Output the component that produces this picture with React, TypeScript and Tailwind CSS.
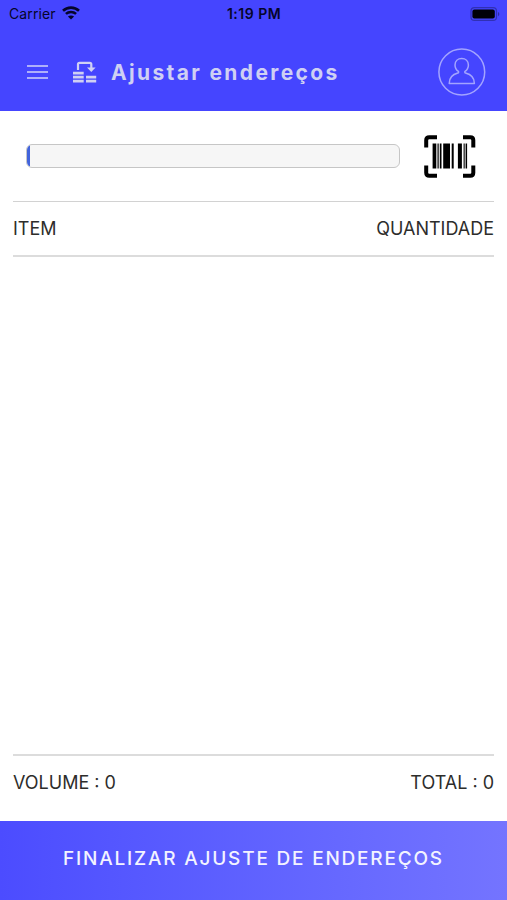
import React from 'react';

const WifiIcon = () => (
  <svg className="ml-[6px] -mt-[2px]" width="18" height="14" viewBox="0 0 18 14" fill="none">
    <path d="M1 4.8C5.4.6 12.6.6 17 4.8" stroke="#05052a" strokeWidth="2.6" />
    <path d="M3.9 7.9C6.8 5.2 11.2 5.2 14.1 7.9" stroke="#05052a" strokeWidth="2.5" />
    <path d="M9 13.6L5.9 10.5C7.6 9 10.4 9 12.1 10.5Z" fill="#05052a" />
  </svg>
);

const BatteryIcon = () => (
  <svg width="32" height="15" viewBox="0 0 32 15">
    <rect x="2" y="0.6" width="25.5" height="12.8" rx="3.5" fill="none" stroke="#3030b4" strokeWidth="1.2" />
    <rect x="3.4" y="2.4" width="22.4" height="9.2" rx="2" fill="#000008" />
    <path d="M29 5C30.8 5.6 30.8 8.6 29 9.2Z" fill="#2c2ca4" />
  </svg>
);

const AdjustIcon = () => (
  <svg width="24" height="22" viewBox="0 0 24 22" fill="none">
    <path d="M5 9V3.3Q5 1.8 6.5 1.8H16.8Q18.3 1.8 18.3 3.3V7" stroke="#cfd0f3" strokeWidth="2.2" />
    <path d="M14 6.4H22.6L18.3 11Z" fill="#cfd0f3" />
    <path d="M0 12.2H10.7M0 16.2H10.7M0 20.2H10.7M13 16.2H23.2M13 20.2H23.2" stroke="#cfd0f3" strokeWidth="2.7" />
  </svg>
);

const UserIcon = () => (
  <svg width="48" height="48" viewBox="0 0 48 48" fill="none" stroke="#a3a4ff" strokeWidth="1.5">
    <circle cx="23.8" cy="24" r="22.9" />
    <path d="M20.4 23.4C18.2 21.8 17 19.6 17 16.9C17 13 19.9 10.4 23.7 10.4S30.4 13 30.4 16.9C30.4 19.6 29.2 21.8 27 23.4C26.6 24.2 26.8 24.8 27.6 25C33 26.4 36.4 29 36.4 35.4H11.2C11.2 29 14.6 26.4 19.8 25C20.6 24.8 20.8 24.2 20.4 23.4Z" strokeLinejoin="round" />
  </svg>
);

const BarcodeIcon = () => (
  <svg width="52" height="44" viewBox="0 0 52 44">
    <path
      d="M2.2 12.5V5.2Q2.2 2.2 5.2 2.2H13M39 2.2H46.3Q49.3 2.2 49.3 5.2V12.5M49.3 30.5V37.8Q49.3 40.8 46.3 40.8H39M13 40.8H5.2Q2.2 40.8 2.2 37.8V30.5"
      fill="none"
      stroke="#000"
      strokeWidth="4"
    />
    <path d="M8.6 8.5h3.7v25H8.6zM13.5 8.5h1.2v25h-1.2zM15.8 8.5h1.7v25h-1.7zM19.2 8.5h6.8v25h-6.8zM27.7 8.5h2v25h-2zM33.9 8.5h4v25h-4zM39.6 8.5h1.1v25h-1.1zM41.6 8.5h1.5v25h-1.5z" />
  </svg>
);

const App = () => {
  return (
    <div className="h-[900px] w-[507px] overflow-hidden bg-white flex flex-col font-['Inter','Liberation_Sans',sans-serif] text-[#2d2d2b]">
      <header className="h-[111px] shrink-0 bg-[#4545ff]">
        {/* Status bar */}
        <div className="h-7 grid grid-cols-3 items-center pl-[9px] pr-[6px] text-[#05052a]">
          <div className="flex items-center">
            <span className="text-[14px] leading-7 tracking-[0.1px]">Carrier</span>
            <WifiIcon />
          </div>
          <span className="-ml-[2px] text-center text-[14px] leading-7 font-semibold tracking-[0.5px]">1:19 PM</span>
          <div className="flex justify-end">
            <BatteryIcon />
          </div>
        </div>

        {/* Title bar */}
        <div className="flex items-center pt-[20px] pl-[27px] pr-[21px]">
          <button aria-label="Menu" className="flex flex-col gap-[4px] w-[21px]">
            <span className="h-[2px] bg-[#aeaffa]" />
            <span className="h-[2px] bg-[#aeaffa]" />
            <span className="h-[2px] bg-[#aeaffa]" />
          </button>
          <div className="ml-[25px]">
            <AdjustIcon />
          </div>
          <h1 className="ml-[14px] mt-[2px] text-[21px] leading-6 font-bold tracking-[2.35px] text-[#cfd0f3] whitespace-nowrap">Ajustar endereços</h1>
          <div className="ml-auto">
            <UserIcon />
          </div>
        </div>
      </header>

      <main className="flex-1 flex flex-col px-[13px]">
        <div className="h-[90px] flex items-center pl-[13px] pr-[18px]">
          <div className="flex h-[24px] w-[374px] overflow-hidden rounded-[6px] border border-[#c6c6c6] bg-[#f6f6f6]">
            <span className="w-[3px] bg-[#4264dc]" />
            <input type="text" aria-label="Código" className="flex-1 px-2 outline-none" />
          </div>
          <div className="ml-auto mt-px">
            <BarcodeIcon />
          </div>
        </div>

        <div className="h-[56px] flex items-center justify-between border-t border-b-2 border-[#d2d2d2] border-b-[#dcdcdc] pb-px text-[18px]">
          <span>ITEM</span>
          <span>QUANTIDADE</span>
        </div>

        <div className="flex-1" />

        <div className="h-[67px] flex items-start justify-between border-t-2 border-[#dcdcdc] pt-[13px] text-[18px] leading-7">
          <span>VOLUME : 0</span>
          <span>TOTAL : 0</span>
        </div>
      </main>

      <button className="h-[79px] shrink-0 bg-linear-to-r from-[#4c4cff] to-[#7474ff] pb-[3px] text-[19px] font-medium tracking-[1.8px] text-[#f3f3ff]">
        FINALIZAR AJUSTE DE ENDEREÇOS
      </button>
    </div>
  );
};

export default App;
